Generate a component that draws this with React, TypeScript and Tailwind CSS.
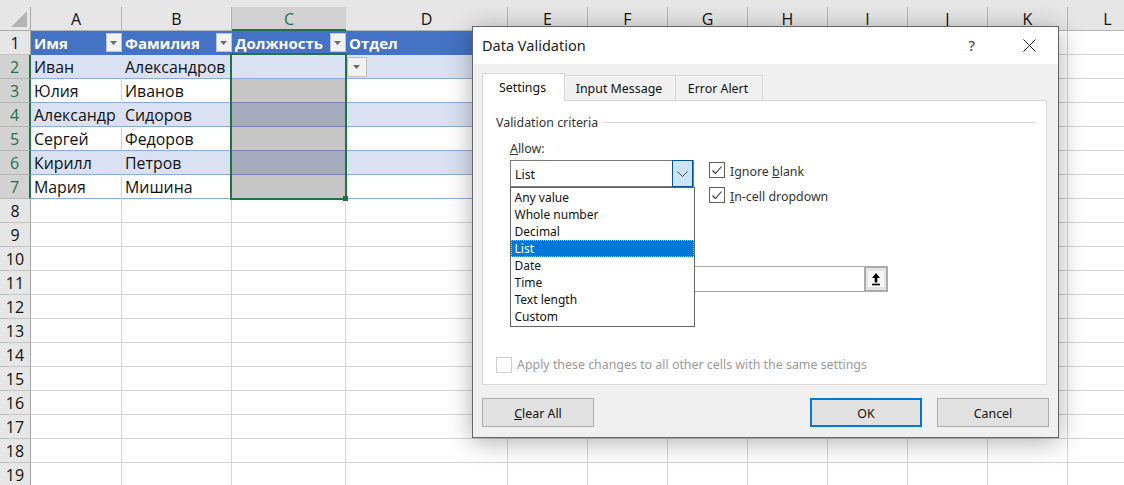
const COLS = ['A','B','C','D','E','F','G','H','I','J','K','L'];
const DATA = [
  ['Имя','Фамилия','Должность','Отдел'],
  ['Иван','Александров','',''],
  ['Юлия','Иванов','',''],
  ['Александр','Сидоров','',''],
  ['Сергей','Федоров','',''],
  ['Кирилл','Петров','',''],
  ['Мария','Мишина','',''],
];
const ITEMS = ['Any value','Whole number','Decimal','List','Date','Time','Text length','Custom'];

function FilterBtn() {
  return (
    <span className="absolute right-0 top-[2px] flex h-[19px] w-[16px] items-center justify-center border border-[#c4c4c4] bg-[#f2f2f2]">
      <svg width="8" height="4" viewBox="0 0 8 4"><path d="M0 0h7L3.5 4z" fill="#6a6a6a" /></svg>
    </span>
  );
}

function Check() {
  return (
    <span className="flex h-[16px] w-[16px] items-center justify-center border border-[#5f5f5f] bg-white">
      <svg width="12" height="12" viewBox="0 0 12 12" fill="none"><path d="M1.5 6.5 4.5 9.5 10.5 2.5" stroke="#333" strokeWidth="1.1" /></svg>
    </span>
  );
}

function Sheet() {
  return (
    <div className="grid grid-cols-[31px_91px_110px_114px_162px_repeat(7,80px)_80px] auto-rows-[24px] font-['Open_Sans',sans-serif] text-[15.9px] text-[#111]">
      <div className="relative border-r border-b border-[#a8a8a8] bg-[#e6e6e6]">
        <svg className="absolute left-[11px] top-[4px]" width="16" height="16" viewBox="0 0 16 16"><path d="M16 0V16H0z" fill="#b4b4b4" /></svg>
      </div>
      {COLS.map((c) => (
        <div key={c} className={c === 'C'
          ? 'flex items-center justify-center border-b-2 border-[#217346] bg-[#d2d2d2] pt-[1px] text-[#217346] text-[16px]'
          : 'flex items-center justify-center border-r border-b border-[#b4b4b4] bg-[#e6e6e6] pt-[1px] text-[16px]'}>{c}</div>
      ))}
      {Array.from({length: 19}).map((_, r) => {
        const row = DATA[r];
        const sel = r >= 1 && r <= 6;
        return [
          <div key={'h'+r} className={sel
            ? 'flex items-center justify-center border-r-2 border-b border-r-[#217346] border-b-[#b4b4b4] bg-[#d2d2d2] text-[#217346] text-[16px]'
            : 'flex items-center justify-center border-r border-b border-r-[#a8a8a8] border-b-[#c4c4c4] bg-[#e6e6e6] text-[16px]'}>{r + 1}</div>,
          ...COLS.map((c, i) => {
            const inTable = i < 4 && row;
            const header = inTable && r === 0;
            const band = inTable && r % 2 === 1;
            const selCell = i === 2 && r >= 2 && r <= 6;
            let cls = 'relative flex items-center overflow-hidden whitespace-nowrap pl-[3px] border-b ';
            if (header) cls += 'pt-[1px] bg-[#4472c4] text-[15px] text-white font-bold border-b-[#4472c4] ';
            else if (selCell) cls += (r % 2 === 1 ? 'bg-[#a5abbc] ' : 'bg-[#c6c6c6] ') + 'border-b-[#7186b0] ';
            else if (band) cls += 'pt-[3px] bg-[#d9e1f2] border-b-[#8ea9db] border-r border-r-[#d9e1f2] ';
            else if (inTable) cls += 'pt-[3px] bg-white border-b-[#8ea9db] border-r border-r-[#d4d4d4] ';
            else cls += 'border-r border-[#d4d4d4] ';
            return (
              <div key={c + r} className={cls}>
                {row && i < 4 ? row[i] : ''}
                {header && i < 3 ? <FilterBtn /> : null}
              </div>
            );
          }),
        ];
      })}
    </div>
  );
}

function Dialog() {
  return (
    <div className="absolute left-[472px] top-[26px] flex h-[412px] w-[587px] flex-col border border-[#646464] bg-[#f0f0f0] font-['Noto_Sans',sans-serif] text-[12.4px] text-[#111] shadow-[0_4px_24px_rgba(0,0,0,0.32)]">
      <div className="flex h-[37px] items-center justify-between bg-white pl-[9px] pr-[22px]">
        <span className="text-[14.5px] text-[#222]">Data Validation</span>
        <div className="flex items-center gap-[48px]">
          <span className="text-[15px] text-[#333]">?</span>
          <svg width="13" height="13" viewBox="0 0 13 13"><path d="M.5.5l12 12M12.5.5l-12 12" stroke="#222" strokeWidth="1" fill="none" /></svg>
        </div>
      </div>
      <div className="relative flex-1 px-[9px] pt-[9px]">
        <div className="flex h-[28px] items-end">
          <div className="z-10 flex h-[28px] w-[83px] items-center justify-center border border-b-0 border-[#d9d9d9] bg-white pr-[2px] pt-[1px]">Settings</div>
          <div className="flex h-[26px] w-[111px] items-center justify-center border-y border-r border-[#d9d9d9] pt-[2px] pr-[2px]">Input Message</div>
          <div className="flex h-[26px] w-[87px] items-center justify-center border-y border-r border-[#d9d9d9] pt-[2px] pr-[2px]">Error Alert</div>
        </div>
        <div className="relative h-[285px] w-[565px] -mt-px border border-[#d9d9d9] bg-white px-[13px]">
          <div className="flex h-[42px] items-center gap-[4px] pt-[1px]">
            <span className="whitespace-nowrap pt-[2px] text-[#333]">Validation criteria</span>
            <div className="h-px flex-1 bg-[#dcdcdc] mr-[-2px]" />
          </div>
          <div className="ml-[14px] -mt-[3px] flex h-[17px] items-center pt-[2px] text-[#333]"><span><u>A</u>llow:</span></div>
          <div className="ml-[14px] mt-[3px] flex gap-[15px]">
            <div className="flex h-[27px] w-[184px] items-center border border-[#7a7a7a] bg-white pl-[4px] pt-[3px]">
              <span className="flex-1">List</span>
              <span className="-mt-[3px] flex h-[27px] w-[21px] items-center justify-center border border-[#005499] bg-[#cce4f7]">
                <svg width="11" height="6" viewBox="0 0 11 6" fill="none"><path d="M.5.5l5 5 5-5" stroke="#444" strokeWidth="1" /></svg>
              </span>
            </div>
            <div className="flex flex-col gap-[9px] pt-[2px]">
              <label className="flex h-[16px] items-center gap-[5px] text-[#333]"><Check /><span className="pt-[5px]">Ignore <u>b</u>lank</span></label>
              <label className="flex h-[16px] items-center gap-[5px] text-[#333]"><Check /><span className="pt-[5px]"><u>I</u>n-cell dropdown</span></label>
            </div>
          </div>
          <div className="ml-[198px] mt-[63px] flex h-[26px] w-[194px]">
            <div className="h-full flex-1 border-y border-[#a8a8a8] bg-white" />
            <span className="flex h-[26px] w-[24px] items-center justify-center border-2 border-[#ababab] bg-[#e4e4e4]">
              <span className="flex h-[16px] w-[16px] items-center justify-center bg-[#f6f6f6]">
                <svg width="10" height="13" viewBox="0 0 10 13"><path d="M5 0 9 5H6.3V9.5H3.7V5H1z" fill="#000" /><path d="M1 11.5h8" stroke="#000" strokeWidth="1.6" /></svg>
              </span>
            </span>
          </div>
          <label className="absolute left-[13px] top-[254px] flex items-center gap-[5px] whitespace-nowrap text-[#9a9a9a]">
            <span className="h-[16px] w-[16px] border border-[#cfcfcf] bg-white" />
            <span className="pt-[1px]">Apply these changes to all other cells with the same settings</span>
          </label>
          <div className="absolute left-[27px] top-[86px] z-10 w-[185px] border border-[#646464] bg-white py-px text-[12px]">
            {ITEMS.map((t) => (
              <div key={t} className={t === 'List'
                ? 'flex h-[17px] items-center border border-dotted border-[#9cc7ee] bg-[#0078d7] pl-[2.5px] text-white'
                : 'flex h-[17px] items-center pl-[3.5px]'}>{t}</div>
            ))}
          </div>
        </div>
        <div className="mt-[13px] flex h-[29px] justify-between">
          <div className="flex w-[112px] items-center justify-center border border-[#adadad] bg-[#e1e1e1] pt-[4px]"><span><u>C</u>lear All</span></div>
          <div className="flex gap-[15px]">
            <div className="flex w-[112px] items-center justify-center border-2 border-[#0078d7] bg-[#e1e1e1] pt-[4px]">OK</div>
            <div className="flex w-[112px] items-center justify-center border border-[#adadad] bg-[#e1e1e1] pt-[4px]">Cancel</div>
          </div>
        </div>
      </div>
    </div>
  );
}

export default function App() {
  return (
    <div className="relative h-[485px] w-[1124px] overflow-hidden bg-white">
      <div className="h-[7px] bg-[#e6e6e6]" />
      <Sheet />
      {/* selection frame over the column C cells */}
      <div className="absolute left-[230px] top-[53px] h-[147px] w-[117px] border-2 border-[#217346]" />
      <div className="absolute left-[343px] top-[196px] h-[5px] w-[5px] bg-[#217346]" />
      {/* in-cell dropdown arrow */}
      <div className="absolute left-[347px] top-[57px] flex h-[20px] w-[20px] items-center justify-center border border-[#c0c0c0] bg-[#f2f2f2]">
        <svg width="8" height="4" viewBox="0 0 8 4"><path d="M0 0h7L3.5 4z" fill="#6a6a6a" /></svg>
      </div>
      <Dialog />
    </div>
  );
}
